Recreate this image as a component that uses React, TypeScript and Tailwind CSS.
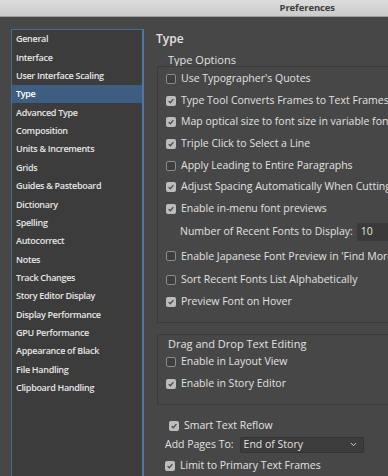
import { ChevronDown } from 'lucide-react';
import clsx from 'clsx';

// ============================================
// Données
// ============================================

const categories = [
  'General',
  'Interface',
  'User Interface Scaling',
  'Type',
  'Advanced Type',
  'Composition',
  'Units & Increments',
  'Grids',
  'Guides & Pasteboard',
  'Dictionary',
  'Spelling',
  'Autocorrect',
  'Notes',
  'Track Changes',
  'Story Editor Display',
  'Display Performance',
  'GPU Performance',
  'Appearance of Black',
  'File Handling',
  'Clipboard Handling',
];

// ============================================
// Composants
// ============================================

function Checkbox({ checked }: { checked: boolean }) {
  return (
    <span
      className={clsx(
        'flex h-[10px] w-[10px] shrink-0 items-center justify-center rounded-[2px]',
        checked ? 'bg-[#bcbcbc]' : 'border border-[#8c8c8c] bg-[#3e3e3e]'
      )}
    >
      {checked && (
        <svg viewBox="0 0 10 10" className="h-[8px] w-[8px]">
          <path d="M2 5.2 L4.1 7.2 L8 2.6" fill="none" stroke="#4a4a4a" strokeWidth="1.6" />
        </svg>
      )}
    </span>
  );
}

interface OptionProps {
  label: string;
  checked: boolean;
  h: string;
}

function Option({ label, checked, h }: OptionProps) {
  return (
    <div className={clsx('flex items-center gap-[5px] whitespace-nowrap', h)}>
      <Checkbox checked={checked} />
      <span>{label}</span>
    </div>
  );
}

// ============================================
// Page
// ============================================

export default function App() {
  return (
    <div
      className="flex h-[476px] w-[388px] flex-col overflow-hidden bg-[#474747] text-[#e2e2e2]"
      style={{ fontFamily: '"Open Sans", sans-serif' }}
    >
      {/* Barre de titre */}
      <div className="flex h-[17px] shrink-0 items-center justify-end border-b border-[#9c9c9c] bg-gradient-to-b from-[#dcdcdc] to-[#cbcbcb] pr-[53px]">
        <span className="text-[9.5px] font-bold leading-none tracking-[-0.1px] text-[#3c3c3c]">Preferences</span>
      </div>

      <div className="flex flex-1 pt-[12px]">
        {/* Liste des catégories */}
        <div className="ml-[11px] w-[133px] shrink-0 border-l border-t border-r-2 border-[#4b6a8c] border-r-[#5276a0] bg-[#3c3c3c]">
          {categories.map((c) => (
            <div
              key={c}
              className={clsx(
                'flex h-[18.35px] items-center whitespace-nowrap pl-[4px] text-[9px] font-semibold tracking-[-0.3px]',
                c === 'Type' ? 'bg-[#3d5e80] text-white' : 'text-[#e6e6e6]'
              )}
            >
              {c}
            </div>
          ))}
        </div>

        {/* Contenu */}
        <div className="ml-[12px] flex min-w-0 flex-1 flex-col overflow-hidden text-[10.5px] font-medium">
          <div className="flex h-[20px] items-center text-[12px] font-semibold">Type</div>

          <div className="ml-[12px] mt-[6px] flex h-[11px] items-center text-[11px]">Type Options</div>

          {/* Options de texte */}
          <div className="ml-[1px] w-[300px] border border-[#3a3a3a] pl-[8px] pb-[8px] pt-[1px]">
            <Option h="h-[21.7px]" checked={false} label="Use Typographer's Quotes" />
            <Option h="h-[21.7px]" checked label="Type Tool Converts Frames to Text Frames" />
            <Option h="h-[21.7px]" checked label="Map optical size to font size in variable fonts" />
            <Option h="h-[21.7px]" checked label="Triple Click to Select a Line" />
            <Option h="h-[21.7px]" checked={false} label="Apply Leading to Entire Paragraphs" />
            <Option h="h-[21.7px]" checked label="Adjust Spacing Automatically When Cutting" />
            <Option h="h-[21.7px]" checked label="Enable in-menu font previews" />
            <div className="flex h-[23.5px] items-center whitespace-nowrap pl-[14px]">
              <span>Number of Recent Fonts to Display:</span>
              <span className="ml-[4px] flex h-[18px] w-[60px] items-center bg-[#3a3a3a] pl-[4px]">10</span>
            </div>
            <Option h="h-[26.3px]" checked={false} label="Enable Japanese Font Preview in 'Find More'" />
            <Option h="h-[20.3px]" checked={false} label="Sort Recent Fonts List Alphabetically" />
            <Option h="h-[23.7px]" checked label="Preview Font on Hover" />
          </div>

          {/* Glisser-déposer */}
          <div className="ml-[1px] mt-[11px] w-[300px] border border-[#3a3a3a] pl-[8px] pb-[6px]">
            <div className="flex h-[20px] items-center pl-[2px] text-[11px]">Drag and Drop Text Editing</div>
            <Option h="h-[15.5px]" checked={false} label="Enable in Layout View" />
            <Option h="h-[27.6px]" checked label="Enable in Story Editor" />
          </div>

          {/* Redistribution */}
          <div className="ml-[1px] mt-[11px] pl-[8px]">
            <div className="pl-[4px]">
              <Option h="h-[20px]" checked label="Smart Text Reflow" />
            </div>
            <div className="flex h-[18px] items-center whitespace-nowrap">
              <span>Add Pages To:</span>
              <span className="ml-[6px] flex h-[16px] w-[124px] items-center justify-between rounded-[2px] border border-[#333] bg-[#3c3c3c] pl-[3px] pr-[5px]">
                End of Story
                <ChevronDown className="h-[9px] w-[9px]" strokeWidth={2.5} />
              </span>
            </div>
            <Option h="h-[24px]" checked label="Limit to Primary Text Frames" />
          </div>
        </div>
      </div>
    </div>
  );
}
